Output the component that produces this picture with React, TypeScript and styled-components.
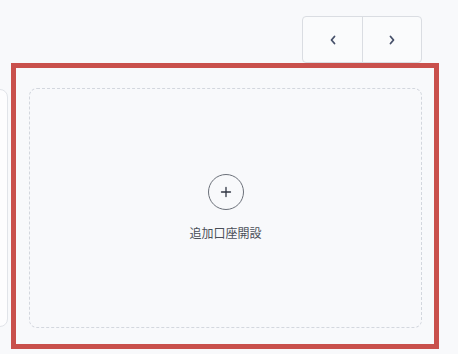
import { createGlobalStyle } from "styled-components";
import styled from "styled-components";

const GlobalStyle = createGlobalStyle`
  html, body {
    margin: 0;
    padding: 0;
    background: #f8f9fb;
    font-family: "Noto Sans", "Noto Sans CJK JP", sans-serif;
    overflow: hidden;
  }
`;

export default function App() {
  return (
    <Page>
      <GlobalStyle />
      <Toolbar>
        <NavGroup>
          <NavButton aria-label="前へ">
            <svg width="8" height="10" viewBox="0 0 8 10">
              <polyline points="5.5,1.5 2.5,5 5.5,8.5" fill="none" stroke="#46506a" strokeWidth="1.8" strokeLinecap="round" strokeLinejoin="round" />
            </svg>
          </NavButton>
          <NavButton aria-label="次へ">
            <svg width="8" height="10" viewBox="0 0 8 10">
              <polyline points="2.5,1.5 5.5,5 2.5,8.5" fill="none" stroke="#46506a" strokeWidth="1.8" strokeLinecap="round" strokeLinejoin="round" />
            </svg>
          </NavButton>
        </NavGroup>
      </Toolbar>
      <Track>
        <PrevCard />
        <Highlight>
          <AddCard>
            <PlusCircle>
              <svg width="12" height="12" viewBox="0 0 12 12">
                <path d="M6 1.5v9M1.5 6h9" stroke="#2f3542" strokeWidth="1.3" strokeLinecap="round" />
              </svg>
            </PlusCircle>
            <AddLabel>追加口座開設</AddLabel>
          </AddCard>
        </Highlight>
      </Track>
    </Page>
  );
}

const Page = styled.div`
  width: 458px;
  height: 354px;
  box-sizing: border-box;
`;

const Toolbar = styled.div`
  display: flex;
  justify-content: flex-end;
  padding: 16px 36px 0 0;
`;

const NavGroup = styled.div`
  display: flex;
  border: 1px solid #dadde2;
  border-radius: 4px;
  background: #fafbfc;
  overflow: hidden;
`;

const NavButton = styled.button`
  width: 59px;
  height: 45px;
  border: none;
  background: transparent;
  display: flex;
  align-items: center;
  justify-content: center;
  padding: 0;
  cursor: pointer;
  & + & {
    border-left: 1px solid #dadde2;
  }
`;

const Track = styled.div`
  display: flex;
  align-items: flex-start;
`;

const PrevCard = styled.div`
  flex: none;
  width: 400px;
  height: 238px;
  margin: 26px 0 0 -392px;
  background: #fdfdfe;
  border: 1px solid #e1e4e9;
  border-radius: 8px;
  box-sizing: border-box;
`;

const Highlight = styled.div`
  flex: none;
  margin-left: 3px;
  width: 428px;
  height: 286px;
  box-sizing: border-box;
  border: 5px solid #c9504c;
  padding: 20px 12px 16px 13px;
`;

const AddCard = styled.div`
  height: 100%;
  box-sizing: border-box;
  border: 1px dashed #d3d7de;
  border-radius: 8px;
  background: #f8f9fb;
  display: flex;
  flex-direction: column;
  align-items: center;
  justify-content: center;
  gap: 15px;
`;

const PlusCircle = styled.div`
  width: 36px;
  height: 36px;
  box-sizing: border-box;
  border: 1px solid #6b7079;
  border-radius: 50%;
  display: flex;
  align-items: center;
  justify-content: center;
`;

const AddLabel = styled.span`
  font-size: 12px;
  line-height: 18px;
  color: #4a4f58;
`;
